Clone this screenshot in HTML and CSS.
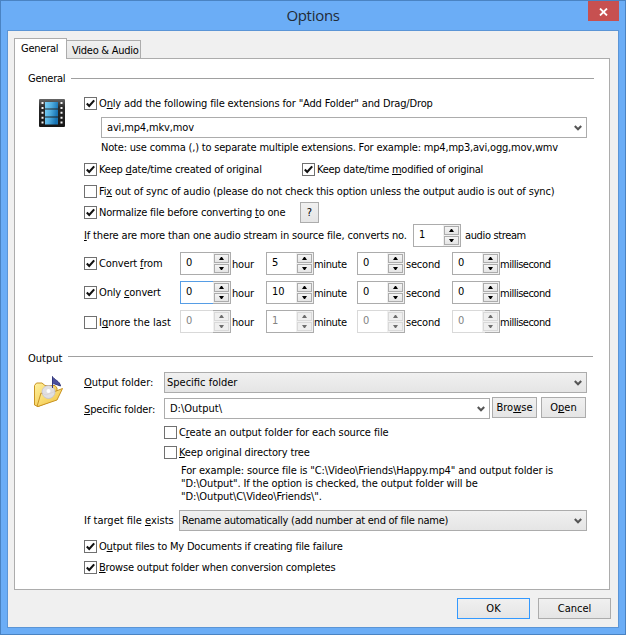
FILE: index.html
```
<!DOCTYPE html>
<html lang="en">
<head>
<meta charset="utf-8">
<title>Options</title>
<link rel="stylesheet" href="styles.css">
</head>
<body>
<svg class="defs" width="0" height="0">
  <defs>
    <linearGradient id="frame" x1="0" y1="0" x2="0" y2="1"><stop offset="0" stop-color="#666"/><stop offset=".3" stop-color="#2a2a2a"/><stop offset="1" stop-color="#161616"/></linearGradient>
    <linearGradient id="film" x1="0" y1="0" x2="1" y2=".3"><stop offset="0" stop-color="#7fd0f5"/><stop offset=".5" stop-color="#50addf"/><stop offset="1" stop-color="#1874b4"/></linearGradient>
    <linearGradient id="gold" x1="0" y1="0" x2="1" y2="1"><stop offset="0" stop-color="#fff2a0"/><stop offset="1" stop-color="#f0bd35"/></linearGradient>
    <symbol id="tick" viewBox="0 0 11 11"><path d="M1.8 5.6 4.2 8 9.2 2.4" fill="none" stroke="#111" stroke-width="2.1"/></symbol>
    <symbol id="chev" viewBox="0 0 8 6"><path d="M.8 1 4 4.2 7.2 1" fill="none" stroke="#555" stroke-width="2.1"/></symbol>
    <symbol id="up" viewBox="0 0 5 3"><path d="M0 3 2 0H3L5 3Z" fill="currentColor"/></symbol>
    <symbol id="down" viewBox="0 0 5 3"><path d="M0 0H5L3 3H2Z" fill="currentColor"/></symbol>
  </defs>
</svg>
<div class="window">
  <header class="titlebar">
    <h1>Options</h1>
    <div class="close"><svg width="9" height="8" viewBox="0 0 9 8"><path d="M1 .5 8 7.5M8 .5 1 7.5" stroke="#fff" stroke-width="1.8"/></svg></div>
  </header>
  <main class="client">
    <nav class="tabs">
      <div class="tab active"><span class="ls3">General</span></div>
      <div class="tab"><span class="ls3">Video &amp; Audio</span></div>
    </nav>
    <div class="panel">
      <div class="heading"><span class="ls3">General</span><i></i></div>
      <section class="general">
        <div class="icon">
          <svg class="film" width="26" height="29" viewBox="0 0 26 29">
            <rect width="26" height="28" rx="1" fill="url(#frame)"/>
            <path d="M6 3H19V9.5H6ZM6 10.5H19V17.5H6ZM6 18.5H19V25.5H6Z" fill="url(#film)"/>
            <path d="M3.5 3V27M22.5 3V27" stroke="#f4f4f4" stroke-width="2" stroke-dasharray="2 2.9"/>
          </svg>
        </div>
        <div class="rows">
          <div class="row only"><b class="box"><svg><use href="#tick"/></svg></b><span class="ls1">O<u>n</u>ly add the following file extensions for "Add Folder" and Drag/Drop</span></div>
          <div class="combo edit ext"><span class="ls1">avi,mp4,mkv,mov</span><svg><use href="#chev"/></svg></div>
          <div class="row note"><span class="ls2">Note: use comma (,) to separate multiple extensions. For example: mp4,mp3,avi,ogg,mov,wmv</span></div>
          <div class="row dates"><div class="col"><b class="box"><svg><use href="#tick"/></svg></b><span class="ls2">Keep <u>d</u>ate/time created of original</span></div><b class="box"><svg><use href="#tick"/></svg></b><span class="ls3">Keep date/time <u>m</u>odified of original</span></div>
          <div class="row sync"><b class="box"></b><span class="ls1">Fi<u>x</u> out of sync of audio (please do not check this option unless the output audio is out of sync)</span></div>
          <div class="row norm"><div class="col"><b class="box"><svg><use href="#tick"/></svg></b><span class="ls2">Normalize file before converting <u>t</u>o one</span></div><div class="button help">?</div></div>
          <div class="row stream"><div class="col"><span class="ls1"><u>I</u>f there are more than one audio stream in source file, converts no.</span></div><div class="spin"><em>1</em><div class="arrows"><i><svg><use href="#up"/></svg></i><i><svg><use href="#down"/></svg></i></div></div><span class="after ls4">audio stream</span></div>
          <div class="row time">
            <div class="name"><b class="box"><svg><use href="#tick"/></svg></b><span class="ls1">Convert <u>f</u>rom</span></div>
            <div class="unit hour"><div class="spin"><em>0</em><div class="arrows"><i><svg><use href="#up"/></svg></i><i><svg><use href="#down"/></svg></i></div></div><span class="ls2">hour</span></div>
            <div class="unit minute"><div class="spin"><em>5</em><div class="arrows"><i><svg><use href="#up"/></svg></i><i><svg><use href="#down"/></svg></i></div></div><span class="ls4">minute</span></div>
            <div class="unit second"><div class="spin"><em>0</em><div class="arrows"><i><svg><use href="#up"/></svg></i><i><svg><use href="#down"/></svg></i></div></div><span class="ls2">second</span></div>
            <div class="unit millisecond"><div class="spin"><em>0</em><div class="arrows"><i><svg><use href="#up"/></svg></i><i><svg><use href="#down"/></svg></i></div></div><span class="ls5">millisecond</span></div>
          </div>
          <div class="row time">
            <div class="name"><b class="box"><svg><use href="#tick"/></svg></b><span class="ls1">Only <u>c</u>onvert</span></div>
            <div class="unit hour"><div class="spin focus"><em>0</em><div class="arrows"><i><svg><use href="#up"/></svg></i><i><svg><use href="#down"/></svg></i></div></div><span class="ls2">hour</span></div>
            <div class="unit minute"><div class="spin"><em>10</em><div class="arrows"><i><svg><use href="#up"/></svg></i><i><svg><use href="#down"/></svg></i></div></div><span class="ls4">minute</span></div>
            <div class="unit second"><div class="spin"><em>0</em><div class="arrows"><i><svg><use href="#up"/></svg></i><i><svg><use href="#down"/></svg></i></div></div><span class="ls2">second</span></div>
            <div class="unit millisecond"><div class="spin"><em>0</em><div class="arrows"><i><svg><use href="#up"/></svg></i><i><svg><use href="#down"/></svg></i></div></div><span class="ls5">millisecond</span></div>
          </div>
          <div class="row time last">
            <div class="name"><b class="box"></b><span>I<u>g</u>nore the last</span></div>
            <div class="unit hour"><div class="spin off"><em>0</em><div class="arrows"><i><svg><use href="#up"/></svg></i><i><svg><use href="#down"/></svg></i></div></div><span class="ls2">hour</span></div>
            <div class="unit minute"><div class="spin off solid"><em>1</em><div class="arrows"><i><svg><use href="#up"/></svg></i><i><svg><use href="#down"/></svg></i></div></div><span class="ls4">minute</span></div>
            <div class="unit second"><div class="spin off"><em>0</em><div class="arrows"><i><svg><use href="#up"/></svg></i><i><svg><use href="#down"/></svg></i></div></div><span class="ls2">second</span></div>
            <div class="unit millisecond"><div class="spin off"><em>0</em><div class="arrows"><i><svg><use href="#up"/></svg></i><i><svg><use href="#down"/></svg></i></div></div><span class="ls5">millisecond</span></div>
          </div>
        </div>
      </section>
      <div class="heading second-heading"><span>Output</span><i></i></div>
      <section class="output">
        <div class="icon">
          <svg class="folder" width="31" height="33" viewBox="0 0 31 33">
            <path d="M1.5 30V10.5L3.5 8H9L12 10.5H22L24 13V24L5 31.5Z" fill="url(#gold)" stroke="#c99424"/>
            <path d="M4 31.5 8 18 13 20 29.5 13.5 24 25 5 31.5Z" fill="url(#gold)" stroke="#c99424"/>
            <circle cx="15.5" cy="17" r="6.5" fill="#dcdff5" fill-opacity=".85" stroke="#b9bbdd" stroke-width=".7"/>
            <circle cx="15.5" cy="16" r="2" fill="#fff"/>
            <path d="M19.5 13V1.5C20.5 4.5 27 6 27.5 11L20.5 8.5" fill="#4b4f9e" stroke="#34387c"/>
          </svg>
        </div>
        <div class="rows">
          <div class="row folder-row"><span class="label"><u>O</u>utput folder:</span><div class="combo"><span>Specific folder</span><svg><use href="#chev"/></svg></div></div>
          <div class="row specific"><span class="label ls1"><u>S</u>pecific folder:</span><div class="combo edit"><span>D:\Output\</span><svg><use href="#chev"/></svg></div><div class="button browse"><span>Bro<u>w</u>se</span></div><div class="button open"><span>O<u>p</u>en</span></div></div>
          <div class="row sub create"><b class="box"></b><span>C<u>r</u>eate an output folder for each source file</span></div>
          <div class="row sub"><b class="box"></b><span class="ls1"><u>K</u>eep original directory tree</span></div>
          <p class="example">For example: source file is "C:\Video\Friends\Happy.mp4" and output folder is<br>"D:\Output". If the option is checked, the output folder will be<br>"D:\Output\C\Video\Friends\".</p>
          <div class="row exists"><span class="label">If target file <u>e</u>xists</span><div class="combo"><span class="ls3">Rename automatically (add number at end of file name)</span><svg><use href="#chev"/></svg></div></div>
          <div class="row docs"><b class="box"><svg><use href="#tick"/></svg></b><span class="ls2">O<u>u</u>tput files to My Documents if creating file failure</span></div>
          <div class="row open-after"><b class="box"><svg><use href="#tick"/></svg></b><span class="ls2"><u>B</u>rowse output folder when conversion completes</span></div>
        </div>
      </section>
    </div>
    <footer class="actions"><div class="button default">OK</div><div class="button"><span>Cancel</span></div></footer>
  </main>
</div>
</body>
</html>
```
FILE: styles.css
```
* { box-sizing: border-box; }
body { margin: 0; font: 11px/13px "DejaVu Sans Condensed", "DejaVu Sans", sans-serif; color: #000; white-space: nowrap; }
i, em, b { font-style: normal; font-weight: normal; }
u { text-decoration-thickness: 1px; text-underline-offset: 1px; text-decoration-skip-ink: none; }
svg { display: block; flex: none; }
.defs { position: absolute; }

.ls1 { letter-spacing: -.15px; }
.ls2 { letter-spacing: -.19px; }
.ls3 { letter-spacing: -.25px; }
.ls4 { letter-spacing: -.36px; }
.ls5 { letter-spacing: -.5px; }

.window { width: 626px; height: 635px; border: 1px solid #4a83c2; background: #6badf6; padding: 0 6px; display: flex; flex-direction: column; }
.titlebar { height: 29px; display: flex; justify-content: center; align-items: center; position: relative; }
.titlebar h1 { margin: -2px 0 0; font: 15px/20px "Open Sans", sans-serif; letter-spacing: -.3px; color: #222b36; }
.close { position: absolute; right: 0; top: 0; width: 31px; height: 20px; background: #c75050; display: flex; align-items: center; justify-content: center; padding-top: 1px; }
.client { width: 612px; height: 598px; border: 1px solid #5b95d6; background: #f0f0f0; padding: 7px 7px 0 6px; }

.tabs { display: flex; align-items: flex-end; height: 20px; }
.tab { height: 18px; width: 74px; border: 1px solid #acacac; border-left: 0; border-bottom: 0; background: linear-gradient(#f0f0f0, #e5e5e5); padding: 3px 0 0 5px; }
.tab.active { width: 53px; height: 21px; margin-bottom: -1px; border-left: 1px solid #acacac; background: #fff; padding: 3px 0 0 6px; position: relative; z-index: 1; }
.panel { width: 596px; height: 532px; border: 1px solid #acacac; background: #fff; padding: 13px 13px 0; }

.heading { display: flex; height: 13px; gap: 6px; padding-right: 2px; }
.heading i { flex: 1; height: 1px; margin-top: 6px; background: #a0a0a0; }
.second-heading { margin-top: 19px; padding-right: 3px; }
.second-heading i { margin-top: 4px; }
.general, .output { display: flex; }
.icon { width: 56px; flex: none; }
.film { margin: 14px 0 0 11px; }
.folder { margin: 10px 0 0 5px; }
.rows { width: 510px; }
.row { display: flex; align-items: center; height: 13px; }
.box { width: 13px; height: 13px; flex: none; border: 1px solid #707070; background: #fff; margin-right: 2px; }
.box svg { width: 11px; height: 11px; }
.only { margin-top: 12px; }

.combo { height: 21px; display: flex; align-items: center; justify-content: space-between; border: 1px solid #acacac; background: linear-gradient(#f0f0f0, #e5e5e5); padding: 0 4px 0 2px; }
.combo svg { width: 8px; height: 6px; }
.combo.edit { background: #fff; padding-left: 5px; }
.ext { margin: 7px 0 0 17px; width: 486px; }
.note { margin-top: 3px; padding-left: 17px; }
.dates { margin-top: 9px; }
.col { display: flex; }
.dates .col { width: 218px; }
.sync { margin-top: 9px; }
.norm { margin-top: 4px; height: 21px; }
.norm .col { width: 216px; }
.button { display: flex; align-items: center; justify-content: center; height: 21px; border: 1px solid #acacac; background: linear-gradient(#f0f0f0, #e5e5e5); }
.help { width: 19px; }
.stream { margin-top: 1px; height: 23px; }
.stream .col { width: 329px; }
.after { margin-left: 4px; }

.spin { width: 48px; height: 23px; flex: none; display: flex; justify-content: space-between; border: 1px solid #acacac; background: #fff; }
.spin em { padding: 3px 0 0 5px; }
.arrows { width: 17px; padding: 1px; background: #f0f0f0; display: flex; flex-direction: column; justify-content: space-between; }
.arrows i { height: 9px; border: 1px solid #acacac; background: linear-gradient(#f5f5f5, #e5e5e5); display: flex; align-items: center; justify-content: center; }
.arrows svg { width: 5px; height: 3px; }
.focus { border-image: linear-gradient(to right, #569de5 33px, #acacac 33px) 1; }
.off { color: #838383; border-image: linear-gradient(to right, #d9d9d9 33px, #acacac 33px) 1; }
.off.solid { border-image: none; }
.off .arrows i { border-color: #d9d9d9; background: #efefef; }
.off .arrows { color: #6d6d6d; }
.time { height: 23px; margin-top: 6px; }
.stream + .time { margin-top: 5px; }
.name { width: 96px; display: flex; }
.last .name { padding-top: 1px; }
.unit { display: flex; align-items: center; }
.unit span { margin-left: 1px; padding-top: 2px; }
.hour { width: 86px; }
.hour .spin { width: 51px; }
.minute { width: 91px; }
.second { width: 95px; }
.minute span, .millisecond span { margin-left: 0; }

.folder-row { margin-top: 7px; height: 21px; }
.label { width: 80px; }
.folder-row .combo { width: 423px; }
.specific { margin-top: 4px; height: 22px; }
.specific .label { padding-top: 3px; }
.specific .edit { width: 326px; height: 21px; margin-top: 1px; }
.specific .button { margin-top: -1px; }
.browse { width: 45px; margin-left: 2px; }
.open { width: 45px; margin-left: 4px; }
.sub { padding-left: 80px; margin-top: 7px; }
.example { margin: 5px 0 0 97px; letter-spacing: -.125px; }
.exists { margin-top: 7px; height: 21px; }
.exists .label { width: 95px; }
.exists .combo { width: 408px; }
.docs { margin-top: 9px; }
.open-after { margin-top: 8px; }
.create span { letter-spacing: -.1px; }

.actions { display: flex; justify-content: flex-end; gap: 8px; margin-top: 8px; }
.actions .button { width: 73px; }
.actions .default { border-color: #3399ff; }
```
